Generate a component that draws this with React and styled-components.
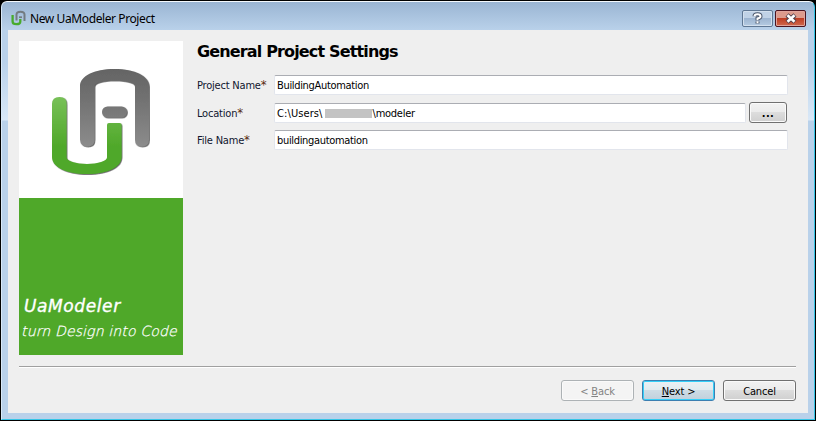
import React from "react";
import styled, { createGlobalStyle, css } from "styled-components";

const Global = createGlobalStyle`
  * { box-sizing: border-box; }
  body { margin: 0; background: #000; overflow: hidden; }
`;

const Window = styled.div`
  width: 816px;
  height: 421px;
  display: flex;
  flex-direction: column;
  padding: 1px 1px 1px 1px;
  background: #000;
  font-family: "DejaVu Sans Condensed", "DejaVu Sans", sans-serif;
  font-stretch: condensed;
  font-size: 11px;
  color: #000;
`;

const Frame = styled.div`
  flex: 1;
  display: flex;
  flex-direction: column;
  border: 1px solid #35c5e6;
  border-top-color: #f4f9fd;
  border-left-color: #d9e9f8;
  border-radius: 6px 6px 0 0;
  padding: 0 6px 6px;
  background: linear-gradient(#9ab5d3 0, #b9d1ea 28px, #b9d1ea 60px, #d9e8f7 118px, #b9d1ea 119px);
`;

const TitleBar = styled.header`
  height: 28px;
  flex: none;
  display: flex;
  align-items: center;
  padding: 4px 2px 0 3px;
`;

const Title = styled.span`
  flex: 1;
  margin: 0 0 0 4px;
  font: 12px "Noto Sans", sans-serif;
  letter-spacing: ${(p) => p.$spacing};
  white-space: pre;
`;

const CaptionButton = styled.button`
  width: 31px;
  height: 17px;
  margin-left: 2px;
  padding: 0;
  display: grid;
  place-items: center;
  border: 1px solid ${(p) => (p.$close ? "#4a1420" : "#5f7793")};
  border-radius: 2px;
  box-shadow: inset 0 0 0 1px ${(p) => (p.$close ? "#e0a49c" : "#d3e0ee")};
  background: ${(p) =>
    p.$close
      ? "linear-gradient(#dc9b8d 0 45%, #bc3a20 46%, #d06a50)"
      : "linear-gradient(#c0d2e6 0 45%, #9bb3cf 46%, #b5cbe2)"};
`;

const Client = styled.main`
  flex: 1;
  display: flex;
  flex-direction: column;
  padding: 11px 12px 0 11px;
  background: #efefef;
`;

const Body = styled.div`
  display: flex;
  height: 314px;
`;

const Banner = styled.aside`
  width: 164px;
  display: flex;
  flex-direction: column;
  background: #4fa829;
  color: #fff;
`;

const LogoPanel = styled.div`
  height: 157px;
  flex: none;
  background: #fff;
`;

const BannerText = styled.div`
  font-family: "DejaVu Sans", sans-serif;
  font-stretch: normal;
  font-style: italic;
  white-space: pre;
  ${(p) =>
    p.$large
      ? css`
          margin: 97px 0 0 5px;
          font-size: 17px;
          line-height: 22px;
          letter-spacing: 0.6px;
          -webkit-text-stroke: 0.35px #fff;
        `
      : css`
          margin: 4px 0 0 2px;
          font-family: "DejaVu Sans Light", "DejaVu Sans", sans-serif;
          font-size: 14px;
          line-height: 20px;
          font-weight: 200;
          letter-spacing: 0.15px;
          -webkit-text-stroke: 0.25px #fff;
        `}
`;

const Form = styled.section`
  flex: 1;
  padding-left: 14px;
`;

const Heading = styled.h1`
  margin: 0 0 14px;
  height: 20px;
  font-family: "DejaVu Sans", sans-serif;
  font-stretch: normal;
  font-size: 16px;
  line-height: 22px;
  font-weight: bold;
  letter-spacing: -0.85px;
  white-space: pre;
`;

const Row = styled.label`
  display: grid;
  grid-template-columns: 77px 1fr auto;
  align-items: center;
  width: 591px;
  height: ${(p) => p.$height || 20}px;
  margin-bottom: ${(p) => p.$gap || 0}px;
`;

const Label = styled.span`
  line-height: 14px;
  padding-top: 2px;
  letter-spacing: -0.2px;
  white-space: pre;
  color: #10152e;
`;

const Star = styled.span`
  color: #5a2a10;
  font-size: 13px;
  line-height: 1px;
`;

const Field = styled.div`
  height: 20px;
  display: flex;
  align-items: center;
  padding: 1px 0 0 2px;
  background: #fff;
  border: 1px solid #e2e5ec;
  border-top-color: #abadb3;
  border-radius: 2px;
  letter-spacing: ${(p) => p.$spacing || "-0.33px"};
`;

const Redacted = styled.span`
  width: 47px;
  height: 9px;
  margin: 0 1px 0 2px;
  background: #c3c3c3;
`;

const Path = styled.span`
  letter-spacing: -0.25px;
`;

const Button = styled.button`
  width: ${(p) => p.$width || 73}px;
  height: 21px;
  padding: 1px 0 0;
  margin: 0;
  font: inherit;
  color: #000;
  letter-spacing: -0.15px;
  text-align: center;
  white-space: pre;
  border: 1px solid #707070;
  border-radius: 3px;
  box-shadow: inset 0 0 0 1px #fafafa;
  background: linear-gradient(#f2f2f2 0, #ebebeb 48%, #dddddd 50%, #cfcfcf);
  ${(p) =>
    p.$kind === "default" &&
    css`
      border-color: #3c7fb1;
      box-shadow: inset 0 0 0 1px #35cff8;
      background: linear-gradient(#ecf1f4 0, #e1ebf0 48%, #cedce5 50%, #c0d0dc);
    `}
  ${(p) =>
    p.$kind === "disabled" &&
    css`
      color: #838383;
      border-color: #adb2b5;
      box-shadow: inset 0 0 0 1px #fafafa;
      background: #f4f4f4;
    `}
`;

const Browse = styled(Button)`
  margin-left: 3px;
  margin-right: 1px;
  line-height: 20px;
  font-weight: bold;
  letter-spacing: 0.4px;
`;

const Divider = styled.hr`
  width: 777px;
  height: 2px;
  margin: 11px 0 12px;
  border: 0;
  border-top: 1px solid #a0a0a0;
  background: #fff;
`;

const Footer = styled.footer`
  display: flex;
  justify-content: flex-end;
  gap: 8px;
`;

function Logo() {
  return (
    <svg width="164" height="157" viewBox="19 41 164 157">
      <defs>
        <linearGradient id="gray" gradientUnits="userSpaceOnUse" x1="0" y1="69" x2="0" y2="147">
          <stop offset="0" stopColor="#646464" />
          <stop offset=".35" stopColor="#707070" />
          <stop offset="1" stopColor="#8c8c8c" />
        </linearGradient>
        <linearGradient id="green" gradientUnits="userSpaceOnUse" x1="0" y1="97" x2="0" y2="174">
          <stop offset="0" stopColor="#78c158" />
          <stop offset=".65" stopColor="#4fa829" />
          <stop offset="1" stopColor="#4fa829" />
        </linearGradient>
        <filter id="edge" x="-10%" y="-10%" width="120%" height="120%">
          <feDropShadow dx=".7" dy=".7" stdDeviation=".4" floodColor="#222" floodOpacity=".85" />
        </filter>
      </defs>
      <g filter="url(#edge)">
        <path fill="url(#gray)" d="M80 86C80 76 94 69 114.500 69S149 76 149 86V139.500Q149 146.500 142 146.500T135 139.500V86.500C135 83 127 80.500 114.500 80.500S94.500 83 94.500 86.500V139.500Q94.500 146.500 87.500 146.500T80 139.500Z" />
        <rect fill="url(#gray)" x="102" y="106.500" width="25" height="11" rx="5.500" />
      </g>
      <g filter="url(#edge)">
        <path fill="url(#green)" d="M52 157V104Q52 97 59.500 97T66.500 104V157.500C66.500 161 76 164 87 164S107 161 107 157.500V125Q107 123 109 123H119.500Q121.500 123 121.500 125V157C121.500 167 108 174 87 174S52 167 52 157Z" />
      </g>
    </svg>
  );
}

function AppIcon() {
  return (
    <svg width="15" height="16" viewBox="0 0 15 16" fill="none" strokeWidth="2">
      <path stroke="#737b80" d="M5.500 10.500V4.500Q5.500 1.700 9.500 1.700T13.500 4.500V11" />
      <path stroke="#737b80" strokeWidth="1.700" d="M8 7.200H11" />
      <path stroke="#48ab2c" strokeWidth="2.300" d="M1.600 5V11.500Q1.600 14.200 5.500 14.200T9.300 11.500V9" />
    </svg>
  );
}

function HelpGlyph() {
  return (
    <svg width="11" height="13" viewBox="0 0 11 13" fill="none">
      <path stroke="#4c586c" strokeWidth="4" d="M2.500 4.200Q2.500 2.300 5.500 2.300T8.500 4.400Q8.500 5.700 5.500 6.500V8.500M5.500 9.500V11.500" />
      <path stroke="#fff" strokeWidth="2" d="M2.500 4.200Q2.500 2.300 5.500 2.300T8.500 4.400Q8.500 5.700 5.500 6.500V8.200M5.500 9.300V11.300" />
    </svg>
  );
}

function CloseGlyph() {
  return (
    <svg width="12" height="11" viewBox="0 0 12 11" fill="none">
      <path stroke="#50404c" strokeWidth="4.500" d="M2 2L10 9M10 2L2 9" />
      <path stroke="#fff" strokeWidth="2.600" d="M2.500 2.300L9.500 8.700M9.500 2.300L2.500 8.700" />
    </svg>
  );
}

export default function App() {
  return (
    <>
      <Global />
      <Window>
        <Frame>
          <TitleBar>
            <AppIcon />
            <Title $spacing="-0.4px">New UaModeler Project</Title>
            <CaptionButton aria-label="Help"><HelpGlyph /></CaptionButton>
            <CaptionButton $close aria-label="Close"><CloseGlyph /></CaptionButton>
          </TitleBar>
          <Client>
            <Body>
              <Banner>
                <LogoPanel><Logo /></LogoPanel>
                <BannerText $large>UaModeler</BannerText>
                <BannerText>turn Design into Code</BannerText>
              </Banner>
              <Form>
                <Heading>General Project Settings</Heading>
                <Row $gap={7}>
                  <Label>Project Name<Star>*</Star></Label>
                  <Field>BuildingAutomation</Field>
                </Row>
                <Row $height={21} $gap={7}>
                  <Label>Location<Star>*</Star></Label>
                  <Field $spacing="0.1px">C:\Users\<Redacted /><Path>\modeler</Path></Field>
                  <Browse as="span" $width={38}>...</Browse>
                </Row>
                <Row>
                  <Label>File Name<Star>*</Star></Label>
                  <Field>buildingautomation</Field>
                </Row>
              </Form>
            </Body>
            <Divider />
            <Footer>
              <Button $kind="disabled">&lt; <u>B</u>ack</Button>
              <Button $kind="default"><u>N</u>ext &gt;</Button>
              <Button>Cancel</Button>
            </Footer>
          </Client>
        </Frame>
      </Window>
    </>
  );
}
